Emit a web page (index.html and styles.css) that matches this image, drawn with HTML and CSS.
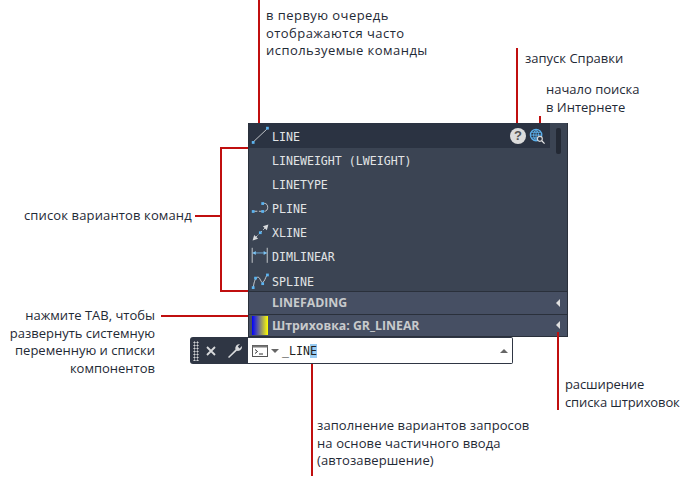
FILE: index.html
```html
<!DOCTYPE html>
<html lang="ru">
<head>
    <meta charset="UTF-8">
    <title>Командная строка</title>
    <link rel="stylesheet" href="styles.css">
</head>
<body>
<div class="canvas">
    <div class="note note-top">в первую очередь<br>отображаются часто<br>используемые команды</div>
    <div class="note note-help">запуск Справки</div>
    <div class="note note-web">начало поиска<br>в Интернете</div>
    <div class="note note-list">список вариантов команд</div>
    <div class="note note-tab">нажмите TAB, чтобы<br>развернуть системную<br>переменную и списки<br>компонентов</div>
    <div class="note note-hatch">расширение<br>списка штриховок</div>
    <div class="note note-auto">заполнение вариантов запросов<br>на основе частичного ввода<br>(автозавершение)</div>

    <div class="panel">
        <div class="rows">
            <div class="row row-active">
                <svg class="row-icon" viewBox="0 0 24 24"><path d="M3 20L20 4" stroke="#e6e8ea" fill="none"/><rect x="1" y="19" width="3.500" height="3.500" fill="#5cb4f0"/><rect x="19" y="1" width="3.500" height="3.500" fill="#5cb4f0"/></svg>
                <span class="row-name">LINE</span>
                <span class="help-btn">?</span>
                <svg class="web-btn" viewBox="0 0 18 18"><circle cx="7.5" cy="7.5" r="6" fill="#2b3342" stroke="#5cb0ec" stroke-width="1.4"/><path d="M1.5 7.5H13.5M2.5 4.5H12.5M2.5 10.5H12.5M7.5 1.5V13.5M7.5 1.5C4 5 4 10 7.5 13.5M7.5 1.5C11 5 11 10 7.5 13.5" stroke="#5cb0ec" fill="none"/><circle cx="11.5" cy="11.5" r="2.6" fill="#2b3342" stroke="#d8d8d8" stroke-width="1.2"/><path d="M13.5 13.5L16.5 16.5" stroke="#e8e8e8" stroke-width="1.3"/></svg>
            </div>
            <div class="row"><span class="row-icon"></span><span class="row-name">LINEWEIGHT (LWEIGHT)</span></div>
            <div class="row"><span class="row-icon"></span><span class="row-name">LINETYPE</span></div>
            <div class="row">
                <svg class="row-icon" viewBox="0 0 24 24"><path d="M4 15.500H14" stroke="#e6e8ea" stroke-dasharray="4 2" fill="none"/><path d="M15 5.500H17C22.500 5.500 22.500 15.500 17 15.500" stroke="#e6e8ea" fill="none"/><rect x="1" y="14" width="3.500" height="3.500" fill="#5cb4f0"/><rect x="13" y="14" width="3.500" height="3.500" fill="#5cb4f0"/><rect x="13" y="4" width="3.500" height="3.500" fill="#5cb4f0"/></svg>
                <span class="row-name">PLINE</span>
            </div>
            <div class="row">
                <svg class="row-icon" viewBox="0 0 24 24"><path d="M4 20L20 4" stroke="#e6e8ea" stroke-dasharray="6 2" fill="none"/><path d="M22 2L15 4L20 9ZM2 22L9 20L4 15Z" fill="#d8dadc"/><rect x="10" y="10.500" width="3.500" height="3.500" fill="#5cb4f0"/></svg>
                <span class="row-name">XLINE</span>
            </div>
            <div class="row">
                <svg class="row-icon" viewBox="0 0 24 24"><path d="M1.500 1V20M20.500 1V20" stroke="#e6e8ea" fill="none"/><path d="M2 7.500H20" stroke="#7cc4f4" fill="none"/><path d="M2 7.500L6 5V10ZM20 7.500L16 5V10Z" fill="#7cc4f4"/></svg>
                <span class="row-name">DIMLINEAR</span>
            </div>
            <div class="row">
                <svg class="row-icon" viewBox="0 0 24 24"><path d="M3 19C4 10 7 5 10 7C12 9 13 14 15 13C17 12 18 8 20 4" stroke="#e6e8ea" fill="none"/><rect x="1" y="18" width="3.500" height="3.500" fill="#5cb4f0"/><rect x="4" y="6" width="3.500" height="3.500" fill="#5cb4f0"/><rect x="13" y="13" width="3.500" height="3.500" fill="#5cb4f0"/><rect x="19" y="2" width="3.500" height="3.500" fill="#5cb4f0"/></svg>
                <span class="row-name">SPLINE</span>
            </div>
            <div class="scroll-thumb"></div>
        </div>
        <div class="group">
            <span class="group-icon"></span>
            <span class="group-name">LINEFADING</span>
            <span class="arrow"></span>
        </div>
        <div class="group">
            <span class="group-icon gradient"></span>
            <span class="group-name">Штриховка: GR_LINEAR</span>
            <span class="arrow"></span>
        </div>
    </div>

    <div class="cmdline">
        <div class="cmd-tools">
            <span class="grip"></span>
            <svg class="tool-x" viewBox="0 0 10 10"><path d="M1 1L9 9M9 1L1 9" stroke="#d8dadc" stroke-width="1.8" fill="none"/></svg>
            <svg class="tool-wrench" viewBox="0 0 16 16"><path d="M2 15L1 14L8.500 6.500C7.800 4 9.500 1 13 1L10.800 3.500L12.500 5.500L15 3C15.300 6.500 12.500 8.500 9.800 7.800Z" fill="#d8dadc"/></svg>
        </div>
        <div class="cmd-input">
            <svg class="prompt-icon" viewBox="0 0 16 12"><rect x="0.500" y="0.500" width="15" height="11" fill="#fff" stroke="#555"/><rect x="0.500" y="0.500" width="15" height="2" fill="#777"/><path d="M3 4.500L5.500 6.500L3 8.500M7 9H11" stroke="#333" fill="none"/></svg>
            <span class="prompt-caret"></span>
            <span class="cmd-text">_LIN<span class="cmd-sel">E</span></span>
            <span class="cmd-up"></span>
        </div>
    </div>

    <div class="lead v lead-top"></div>
    <div class="lead v lead-help"></div>
    <div class="lead v lead-web"></div>
    <div class="lead h lead-bracket-top"></div>
    <div class="lead v lead-bracket"></div>
    <div class="lead h lead-bracket-bottom"></div>
    <div class="lead h lead-list"></div>
    <div class="lead h lead-tab"></div>
    <div class="lead v lead-auto"></div>
    <div class="lead v lead-hatch"></div>
</div>
</body>
</html>
```

FILE: styles.css
```css
html, body {
    margin: 0;
    padding: 0;
    background-color: white;
}

.canvas {
    position: relative;
    width: 696px;
    height: 484px;
    overflow: hidden;
    font-family: "Open Sans", sans-serif;
}

.note {
    position: absolute;
    font-size: 13px;
    line-height: 17.6px;
    color: #1f2a36;
    white-space: nowrap;
}

.note-top { left: 266px; top: 7px; letter-spacing: 0.45px; }
.note-help { left: 525px; top: 50px; }
.note-web { left: 546px; top: 81px; }
.note-list { left: 24px; top: 207px; letter-spacing: 0.13px; }
.note-tab { left: 0; top: 307px; width: 155px; text-align: right; }
.note-hatch { left: 565px; top: 376px; letter-spacing: -0.12px; }
.note-auto { left: 317px; top: 417px; letter-spacing: 0.1px; }

.lead {
    position: absolute;
    background-color: #c00f0f;
}

.lead.v { width: 2px; }
.lead.h { height: 2px; }

.lead-top { left: 258px; top: 0; height: 123px; }
.lead-help { left: 516px; top: 48px; height: 75px; }
.lead-web { left: 539px; top: 116px; height: 7px; }
.lead-bracket-top { left: 220px; top: 147px; width: 28px; }
.lead-bracket { left: 220px; top: 147px; height: 144px; }
.lead-bracket-bottom { left: 220px; top: 290px; width: 28px; }
.lead-list { left: 195px; top: 215px; width: 25px; }
.lead-tab { left: 161px; top: 315px; width: 87px; }
.lead-auto { left: 311px; top: 364px; height: 112px; }
.lead-hatch { left: 557px; top: 332px; height: 78px; }

.panel {
    position: absolute;
    left: 248px;
    top: 123px;
    width: 320px;
    height: 214px;
    background-color: #3b4453;
    display: flex;
    flex-direction: column;
    box-sizing: border-box;
    border-right: 1px solid #2a303b;
    border-bottom: 1px solid #2a303b;
    border-left: 1px solid #2a303b;
}

.rows {
    position: relative;
    height: 168px;
    display: flex;
    flex-direction: column;
}

.row {
    display: flex;
    align-items: center;
    height: 24.2px;
    flex: none;
    padding-left: 2px;
    font-family: "DejaVu Sans Mono", monospace;
    font-size: 11.6px;
    color: #e2e4e6;
}

.row-active {
    width: 301px;
    box-sizing: border-box;
    background-color: #2b3342;
    height: 25px;
}

.row-active .row-name {
    padding-top: 2px;
}

.row-icon {
    width: 19px;
    height: 19px;
    margin-right: 2px;
    flex: none;
}

.row-name {
    flex: 1;
    padding-top: 1px;
}

.help-btn {
    width: 16px;
    height: 16px;
    border-radius: 50%;
    background-color: #dcdcdc;
    color: #555;
    font-family: "Liberation Sans", sans-serif;
    font-size: 13px;
    font-weight: bold;
    line-height: 16px;
    text-align: center;
}

.web-btn {
    width: 17px;
    height: 17px;
    margin: 1px 4px 0 3px;
}

.scroll-thumb {
    position: absolute;
    left: 307px;
    top: 5px;
    width: 5px;
    height: 26px;
    border-radius: 2px;
    background-color: #232934;
}

.group {
    flex: 1;
    display: flex;
    align-items: center;
    border-top: 1px solid #2a303b;
    background-color: #464f63;
    padding-left: 3px;
    padding-right: 7px;
    font-family: "Open Sans", sans-serif;
    font-size: 12.3px;
    font-weight: bold;
    color: #c8cacc;
}

.group-icon {
    width: 16px;
    height: 19px;
    margin-right: 4px;
    flex: none;
}

.gradient {
    background: linear-gradient(to right, #0000ff, #ffff00);
}

.group-name {
    flex: 1;
}

.arrow {
    width: 0;
    height: 0;
    border-top: 4px solid transparent;
    border-bottom: 4px solid transparent;
    border-right: 4px solid #e0e0e0;
}

.cmdline {
    position: absolute;
    left: 190px;
    top: 337px;
    width: 323px;
    height: 27px;
    display: flex;
}

.cmd-tools {
    width: 58px;
    background-color: #2f3644;
    border-radius: 3px 0 0 3px;
    display: flex;
    align-items: center;
    padding-left: 3px;
    box-sizing: border-box;
}

.grip {
    width: 6px;
    height: 20px;
    background-image: radial-gradient(#d0d2d4 45%, transparent 50%);
    background-size: 3px 3px;
}

.tool-x {
    width: 10px;
    height: 10px;
    margin-left: 7px;
}

.tool-wrench {
    width: 16px;
    height: 16px;
    margin-left: 11px;
}

.cmd-input {
    flex: 1;
    display: flex;
    align-items: center;
    background-color: white;
    border: 1px solid #2f3644;
    border-left: none;
    border-radius: 0 2px 2px 0;
    padding-left: 4px;
    padding-right: 4px;
}

.prompt-icon {
    width: 16px;
    height: 12px;
}

.prompt-caret {
    width: 0;
    height: 0;
    margin-left: 3px;
    margin-right: 3px;
    border-left: 4px solid transparent;
    border-right: 4px solid transparent;
    border-top: 4px solid #666;
}

.cmd-text {
    flex: 1;
    font-family: "DejaVu Sans Mono", monospace;
    font-size: 11.6px;
    color: #222;
}

.cmd-sel {
    background-color: #99ccf3;
}

.cmd-up {
    width: 0;
    height: 0;
    border-left: 4px solid transparent;
    border-right: 4px solid transparent;
    border-bottom: 4px solid #666;
}
```
